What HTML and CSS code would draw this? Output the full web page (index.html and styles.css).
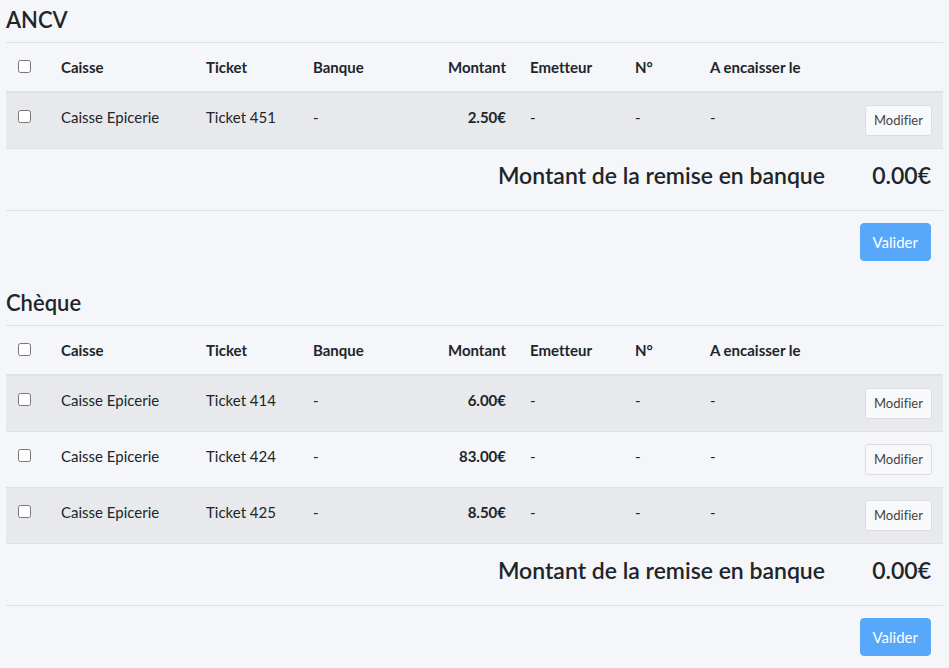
FILE: index.html
```html
<!DOCTYPE html>
<html lang="fr">
<head>
<meta charset="utf-8">
<title>Remises en banque</title>
<link rel="stylesheet" href="styles.css">
</head>
<body>
<div class="page">
  <section class="remise">
    <h4 class="title">ANCV</h4>
    <table class="table">
      <colgroup>
        <col class="c-check"><col class="c-caisse"><col class="c-ticket"><col class="c-banque"><col class="c-montant"><col class="c-emetteur"><col class="c-num"><col class="c-date"><col class="c-actions">
      </colgroup>
      <thead>
        <tr>
          <th><input type="checkbox" class="check"></th>
          <th>Caisse</th>
          <th>Ticket</th>
          <th>Banque</th>
          <th class="right">Montant</th>
          <th>Emetteur</th>
          <th>N°</th>
          <th>A encaisser le</th>
          <th></th>
        </tr>
      </thead>
      <tbody>
        <tr class="odd">
          <td><input type="checkbox" class="check"></td>
          <td>Caisse Epicerie</td>
          <td>Ticket 451</td>
          <td>-</td>
          <td class="right amount">2.50€</td>
          <td>-</td>
          <td>-</td>
          <td>-</td>
          <td class="right"><button class="btn-modif">Modifier</button></td>
        </tr>
        <tr>
          <td colspan="8" class="right total-label"><h4 class="total">Montant de la remise en banque</h4></td>
          <td class="right"><h4 class="total">0.00€</h4></td>
        </tr>
        <tr>
          <td colspan="9" class="right"><button class="btn-valider">Valider</button></td>
        </tr>
      </tbody>
    </table>
  </section>

  <section class="remise">
    <h4 class="title">Chèque</h4>
    <table class="table">
      <colgroup>
        <col class="c-check"><col class="c-caisse"><col class="c-ticket"><col class="c-banque"><col class="c-montant"><col class="c-emetteur"><col class="c-num"><col class="c-date"><col class="c-actions">
      </colgroup>
      <thead>
        <tr>
          <th><input type="checkbox" class="check"></th>
          <th>Caisse</th>
          <th>Ticket</th>
          <th>Banque</th>
          <th class="right">Montant</th>
          <th>Emetteur</th>
          <th>N°</th>
          <th>A encaisser le</th>
          <th></th>
        </tr>
      </thead>
      <tbody>
        <tr class="odd">
          <td><input type="checkbox" class="check"></td>
          <td>Caisse Epicerie</td>
          <td>Ticket 414</td>
          <td>-</td>
          <td class="right amount">6.00€</td>
          <td>-</td>
          <td>-</td>
          <td>-</td>
          <td class="right"><button class="btn-modif">Modifier</button></td>
        </tr>
        <tr>
          <td><input type="checkbox" class="check"></td>
          <td>Caisse Epicerie</td>
          <td>Ticket 424</td>
          <td>-</td>
          <td class="right amount">83.00€</td>
          <td>-</td>
          <td>-</td>
          <td>-</td>
          <td class="right"><button class="btn-modif">Modifier</button></td>
        </tr>
        <tr class="odd">
          <td><input type="checkbox" class="check"></td>
          <td>Caisse Epicerie</td>
          <td>Ticket 425</td>
          <td>-</td>
          <td class="right amount">8.50€</td>
          <td>-</td>
          <td>-</td>
          <td>-</td>
          <td class="right"><button class="btn-modif">Modifier</button></td>
        </tr>
        <tr>
          <td colspan="8" class="right total-label"><h4 class="total">Montant de la remise en banque</h4></td>
          <td class="right"><h4 class="total">0.00€</h4></td>
        </tr>
        <tr>
          <td colspan="9" class="right"><button class="btn-valider">Valider</button></td>
        </tr>
      </tbody>
    </table>
  </section>
</div>
</body>
</html>
```

FILE: styles.css
```css
html, body {
  margin: 0;
  padding: 0;
  background: #f4f6f9;
}

body {
  font-family: Lato, "Noto Sans", "Liberation Sans", sans-serif;
  font-size: 15px;
  line-height: 24px;
  color: #212529;
  font-variant-ligatures: none;
}

.page {
  padding: 5px 6px 0 6px;
}

.title {
  margin: 0 0 8px 0;
  font-size: 22px;
  line-height: 29px;
  font-weight: 600;
}

.table {
  width: 937px;
  border-collapse: collapse;
  table-layout: fixed;
  margin-bottom: 15px;
}

.c-check { width: 43px; }
.c-caisse { width: 145px; }
.c-ticket { width: 107px; }
.c-banque { width: 120px; }
.c-montant { width: 97px; }
.c-emetteur { width: 105px; }
.c-num { width: 75px; }
.c-date { width: 155px; }
.c-actions { width: 90px; }

.table th,
.table td {
  padding: 12px;
  text-align: left;
  vertical-align: top;
  border-top: 1px solid #dee2e6;
  white-space: nowrap;
}

.table thead th {
  font-weight: 700;
  border-bottom: 2px solid #dee2e6;
}

.table tbody tr.odd {
  background: rgba(0, 0, 0, 0.05);
}

.table .right {
  text-align: right;
}

.table .total-label {
  padding-right: 28px;
}

.amount {
  font-weight: 700;
}

.check {
  display: block;
  margin: 5px 0 0 0;
  width: 13px;
  height: 13px;
}

.btn-modif {
  font-family: inherit;
  font-size: 13px;
  line-height: 21px;
  padding: 4px 8px;
  color: #444;
  background: #f8f9fa;
  border: 1px solid #ddd;
  border-radius: 3px;
  font-variant-ligatures: none;
}

.total {
  margin: 0 0 8px 0;
  font-size: 23px;
  line-height: 29px;
  font-weight: 600;
}

.btn-valider {
  font-family: inherit;
  font-size: 15px;
  line-height: 24px;
  padding: 6px 12px;
  color: #fff;
  background: #57a7fb;
  border: 1px solid #57a7fb;
  border-radius: 4px;
}
```
